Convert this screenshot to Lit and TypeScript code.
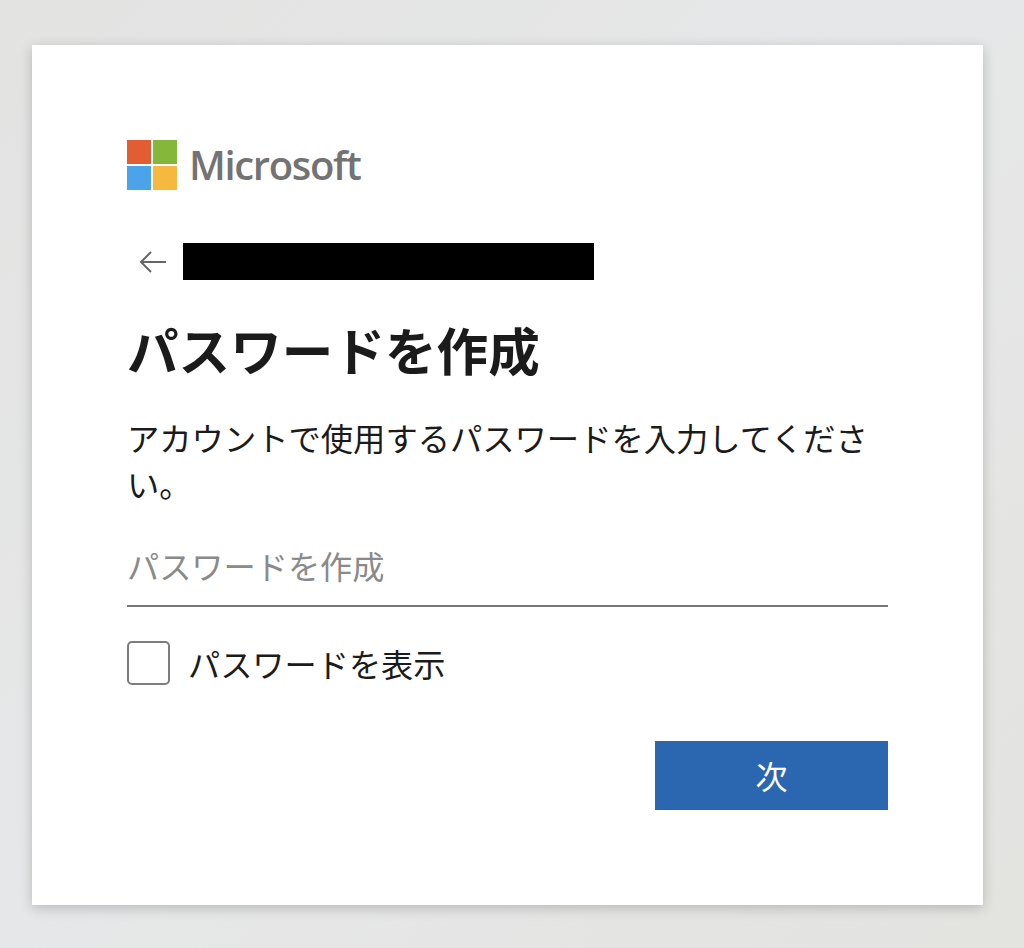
import { LitElement, html, css } from "lit";
import { customElement } from "lit/decorators.js";

@customElement("app-root")
export class AppRoot extends LitElement {
  static styles = css`
    :host {
      display: block;
      width: 1024px;
      height: 948px;
      overflow: hidden;
      font-family: "Noto Sans CJK JP", "Noto Sans", sans-serif;
      color: #1b1b1b;
    }
    .page {
      box-sizing: border-box;
      width: 1024px;
      height: 948px;
      padding: 45px 41px 43px 32px;
      background: linear-gradient(135deg, #e3e3e2 0%, #e6e7e8 45%, #e3e4e0 100%);
    }
    .card {
      box-sizing: border-box;
      width: 951px;
      height: 860px;
      padding: 94px 95px 0;
      background: #fff;
      box-shadow: 0 3px 12px rgba(0, 0, 0, 0.2);
      display: flex;
      flex-direction: column;
    }
    .logo {
      display: flex;
      align-items: center;
      gap: 12px;
      height: 51px;
    }
    .logo-grid {
      display: grid;
      grid-template-columns: 24px 24px;
      grid-template-rows: 24px 24px;
      gap: 2px;
    }
    .r { background: #e35d33; }
    .g { background: #85b83a; }
    .b { background: #4ba3ea; }
    .y { background: #f6b93f; }
    .wordmark {
      font-family: "Open Sans", sans-serif;
      font-weight: 600;
      font-size: 40px;
      line-height: 51px;
      letter-spacing: -1.35px;
      color: #737373;
    }
    .identity {
      display: flex;
      align-items: center;
      margin-top: 53px;
      height: 37px;
      padding-left: 12px;
    }
    .identity svg {
      display: block;
      width: 28px;
      height: 24px;
    }
    .redact {
      width: 411px;
      height: 37px;
      margin-left: 16px;
      background: #000;
    }
    h1 {
      margin: 34px 0 0;
      font-size: 51.6px;
      line-height: 70px;
      font-weight: 700;
      color: #1b1b1b;
    }
    .desc {
      margin: 30px 0 0;
      font-size: 32.3px;
      line-height: 46px;
      font-weight: 400;
      color: #1b1b1b;
    }
    .field {
      margin-top: 39px;
      height: 60px;
      border-bottom: 2px solid #777;
      font-size: 32.2px;
      line-height: 40px;
      color: #8a8a8a;
    }
    .check {
      display: flex;
      align-items: center;
      gap: 18px;
      margin-top: 34px;
      height: 44px;
      font-size: 32.2px;
      line-height: 44px;
    }
    .box {
      box-sizing: border-box;
      width: 43px;
      height: 44px;
      border: 2px solid #7c7c7c;
      border-radius: 5px;
      background: #fff;
    }
    .actions {
      display: flex;
      justify-content: flex-end;
      margin-top: 56px;
    }
    .next {
      width: 233px;
      height: 69px;
      border: none;
      padding: 0;
      background: #2b66b1;
      color: #fff;
      font-family: inherit;
      font-size: 32px;
      line-height: 69px;
    }
  `;

  render() {
    return html`
      <div class="page">
        <div class="card">
          <div class="logo">
            <div class="logo-grid">
              <div class="r"></div>
              <div class="g"></div>
              <div class="b"></div>
              <div class="y"></div>
            </div>
            <span class="wordmark">Microsoft</span>
          </div>
          <div class="identity">
            <svg viewBox="0 0 28 24" fill="none" stroke="#666" stroke-width="2">
              <path d="M27 12H2M12 2 2 12l10 10" />
            </svg>
            <div class="redact"></div>
          </div>
          <h1>パスワードを作成</h1>
          <p class="desc">アカウントで使用するパスワードを入力してください。</p>
          <div class="field">パスワードを作成</div>
          <div class="check">
            <div class="box"></div>
            <span>パスワードを表示</span>
          </div>
          <div class="actions">
            <button class="next">次</button>
          </div>
        </div>
      </div>
    `;
  }
}
